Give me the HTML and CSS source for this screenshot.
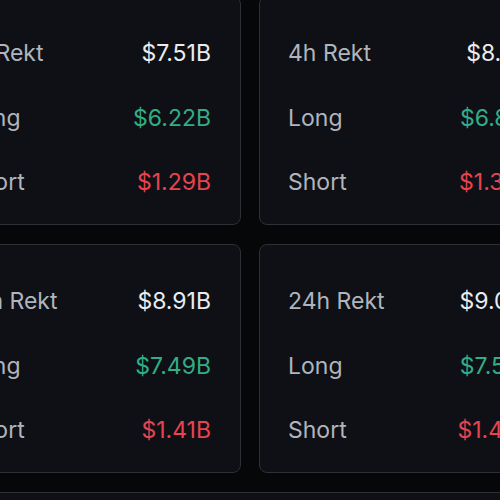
FILE: index.html
```html
<!DOCTYPE html>
<html>
<head>
<meta charset="utf-8">
<link rel="stylesheet" href="styles.css">
</head>
<body>
<div class="grid">
  <div class="card">
    <div class="row"><span class="label">1h Rekt</span><span class="value">$7.51B</span></div>
    <div class="row"><span class="label">Long</span><span class="value up">$6.22B</span></div>
    <div class="row"><span class="label">Short</span><span class="value down">$1.29B</span></div>
  </div>
  <div class="card">
    <div class="row"><span class="label">4h Rekt</span><span class="value">$8.11B</span></div>
    <div class="row"><span class="label">Long</span><span class="value up">$6.81B</span></div>
    <div class="row"><span class="label">Short</span><span class="value down">$1.30B</span></div>
  </div>
  <div class="card">
    <div class="row"><span class="label">12h Rekt</span><span class="value">$8.91B</span></div>
    <div class="row"><span class="label">Long</span><span class="value up">$7.49B</span></div>
    <div class="row"><span class="label">Short</span><span class="value down">$1.41B</span></div>
  </div>
  <div class="card">
    <div class="row"><span class="label">24h Rekt</span><span class="value">$9.01B</span></div>
    <div class="row"><span class="label">Long</span><span class="value up">$7.57B</span></div>
    <div class="row"><span class="label">Short</span><span class="value down">$1.44B</span></div>
  </div>
  <div class="card wide"></div>
</div>
</body>
</html>
```
FILE: styles.css
```css
html, body {
  margin: 0;
  padding: 0;
  background: #060709;
  overflow: hidden;
  height: 500px;
}
body {
  font-family: "Inter", "Noto Sans", sans-serif;
}
.grid {
  display: grid;
  grid-template-columns: 304px 304px;
  gap: 19px 18px;
  margin-left: -63px;
  margin-top: -4px;
  width: 626px;
}
.card {
  background: #0e1015;
  border: 1px solid #2d3036;
  border-radius: 8px;
  height: 229px;
  box-sizing: border-box;
  padding: 38px 29px 24px 28px;
  display: flex;
  flex-direction: column;
  gap: 29px;
}
.card.wide {
  grid-column: 1 / span 2;
}
.row {
  display: flex;
  justify-content: space-between;
  align-items: center;
  height: 36px;
  font-size: 23px;
}
.label {
  color: #b0b5bd;
}
.value {
  color: #eaecef;
}
.value.up {
  color: #32ad86;
}
.value.down {
  color: #e8434f;
}
```
